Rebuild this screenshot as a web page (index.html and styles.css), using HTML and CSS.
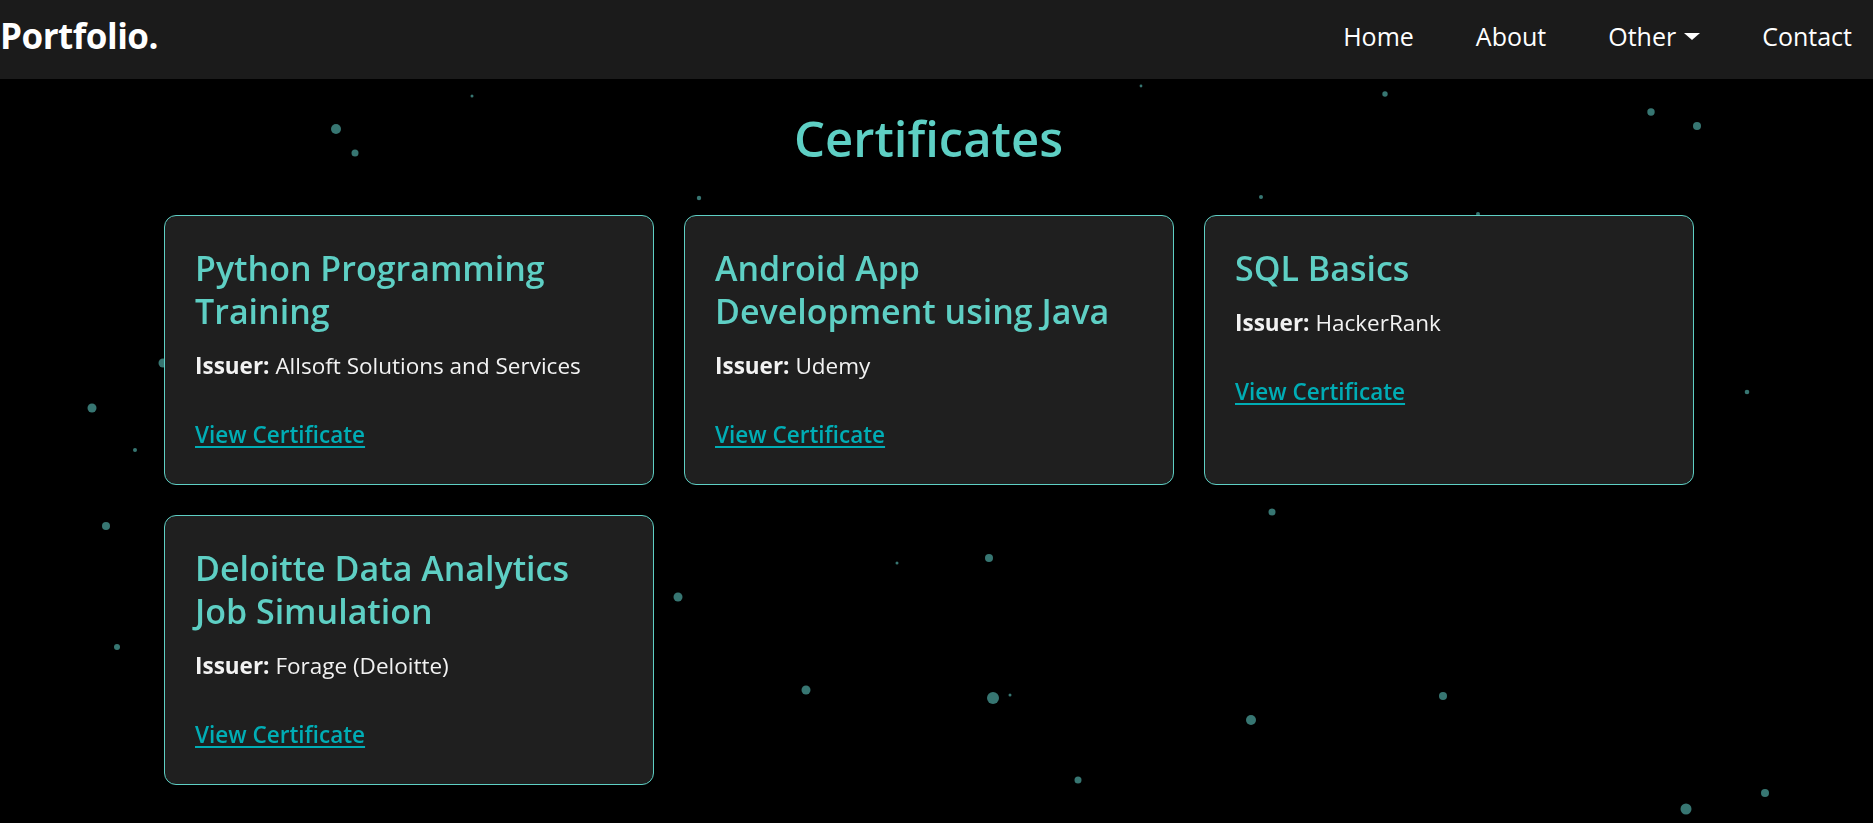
FILE: index.html
```html
<!DOCTYPE html>
<html lang="en">
<head>
<meta charset="utf-8">
<title>Certificates</title>
<link rel="stylesheet" href="styles.css">
</head>
<body>
<svg class="particles" width="1873" height="823" viewBox="0 0 1873 823" aria-hidden="true">
  <g class="dots">
    <circle cx="92" cy="408" r="4.5"/><circle cx="135" cy="450" r="2"/><circle cx="106" cy="526" r="4"/>
    <circle cx="117" cy="647" r="3"/><circle cx="163" cy="363" r="4.5"/>
    <circle cx="336" cy="129" r="5"/><circle cx="355" cy="153" r="3.5"/><circle cx="472" cy="96" r="1.5"/>
    <circle cx="699" cy="198" r="2.2"/><circle cx="1141" cy="86" r="1.4"/><circle cx="1385" cy="94" r="2.7"/>
    <circle cx="1651" cy="112" r="3.7"/><circle cx="1697" cy="126" r="4"/><circle cx="1261" cy="197" r="2"/>
    <circle cx="1478" cy="214" r="2"/><circle cx="1747" cy="392" r="2.3"/>
    <circle cx="1272" cy="512" r="3.5"/><circle cx="989" cy="558" r="4"/><circle cx="897" cy="563" r="1.5"/>
    <circle cx="678" cy="597" r="4.5"/><circle cx="806" cy="690" r="4.5"/><circle cx="993" cy="698" r="6"/>
    <circle cx="1010" cy="695" r="1.5"/><circle cx="1443" cy="696" r="4"/><circle cx="1251" cy="720" r="5"/>
    <circle cx="1078" cy="780" r="3.5"/><circle cx="1765" cy="793" r="4"/><circle cx="1686" cy="809" r="5.5"/>
  </g>
</svg>

<header class="navbar">
  <a class="brand" href="#">Portfolio.</a>
  <nav class="nav-links">
    <a class="nav-link" href="#">Home</a>
    <a class="nav-link" href="#">About</a>
    <a class="nav-link dropdown-toggle" href="#">Other</a>
    <a class="nav-link" href="#">Contact</a>
  </nav>
</header>

<main class="page">
  <h2 class="page-title">Certificates</h2>
  <div class="cert-grid">
    <article class="cert-card">
      <h3 class="cert-title">Python Programming Training</h3>
      <p class="cert-issuer"><strong>Issuer:</strong> Allsoft Solutions and Services</p>
      <p class="cert-link-row"><a class="cert-link" href="#">View Certificate</a></p>
    </article>
    <article class="cert-card">
      <h3 class="cert-title">Android App Development using Java</h3>
      <p class="cert-issuer"><strong>Issuer:</strong> Udemy</p>
      <p class="cert-link-row"><a class="cert-link" href="#">View Certificate</a></p>
    </article>
    <article class="cert-card">
      <h3 class="cert-title">SQL Basics</h3>
      <p class="cert-issuer"><strong>Issuer:</strong> HackerRank</p>
      <p class="cert-link-row"><a class="cert-link" href="#">View Certificate</a></p>
    </article>
    <article class="cert-card">
      <h3 class="cert-title">Deloitte Data Analytics Job Simulation</h3>
      <p class="cert-issuer"><strong>Issuer:</strong> Forage (Deloitte)</p>
      <p class="cert-link-row"><a class="cert-link" href="#">View Certificate</a></p>
    </article>
  </div>
</main>
</body>
</html>
```

FILE: styles.css
```css
* { box-sizing: border-box; }

html, body {
  margin: 0;
  padding: 0;
  background: #000;
  height: 100%;
  overflow: hidden;
}

body {
  font-family: "Open Sans", "Noto Sans", sans-serif;
  color: #fff;
  position: relative;
}

.particles {
  position: fixed;
  left: 0;
  top: 0;
  z-index: 0;
}

.dots circle { fill: #377672; }

.navbar {
  position: relative;
  z-index: 1;
  height: 79px;
  background: #1b1b1b;
  display: flex;
  align-items: center;
  justify-content: space-between;
  padding: 0 21px 8px 0;
}

.brand {
  color: #fff;
  text-decoration: none;
  font-weight: 700;
  font-size: 35px;
  letter-spacing: -0.5px;
}

.nav-links {
  display: flex;
  align-items: center;
  gap: 62px;
}

.nav-link {
  color: #fff;
  text-decoration: none;
  font-size: 25px;
}

.dropdown-toggle::after {
  content: "";
  display: inline-block;
  margin-left: 8px;
  vertical-align: 6px;
  border-top: 7px solid #fff;
  border-left: 8px solid transparent;
  border-right: 8px solid transparent;
}

.page {
  position: relative;
  z-index: 1;
  padding: 28px 180px 0 164px;
}

.page-title {
  margin: 0 0 46px;
  text-align: center;
  color: #5ecfc4;
  font-weight: 600;
  font-size: 49px;
  line-height: 62px;
}

.cert-grid {
  display: grid;
  grid-template-columns: repeat(3, 490px);
  gap: 30px;
}

.cert-card {
  background: #1f1f1f;
  border: 1px solid #5ecfc4;
  border-radius: 12px;
  padding: 30px;
  min-height: 270px;
}

.cert-title {
  margin: 1px 10px 0 0;
  color: #5ecfc4;
  font-weight: 600;
  font-size: 34px;
  line-height: 43px;
}

.cert-issuer {
  margin: 17px 0 0;
  font-size: 22.5px;
  line-height: 32px;
  color: #f2f2f2;
}

.cert-issuer strong { font-weight: 700; }

.cert-link-row {
  margin: 37px 0 0;
  font-size: 22.5px;
  line-height: 32px;
}

.cert-link {
  color: #00adb5;
  font-weight: 600;
  text-decoration: underline;
  text-underline-offset: 3px;
}
```
